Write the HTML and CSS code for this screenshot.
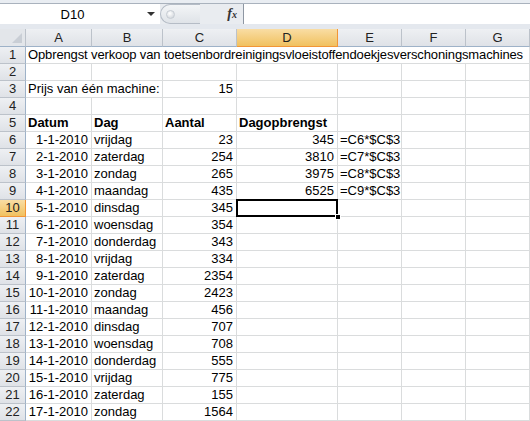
FILE: index.html
```html
<!DOCTYPE html>
<html>
<head>
<meta charset="utf-8">
<link rel="stylesheet" href="styles.css">
</head>
<body>
<div class="app">
  <div class="fbar">
    <div class="namebox">
      <span class="name">D10</span>
      <span class="arrow"></span>
    </div>
    <div class="fxzone">
      <div class="pill"><span class="knob"></span></div>
      <span class="fx">f<span class="x">x</span></span>
    </div>
    <div class="input"></div>
  </div>
  <div class="sheet">
    <div class="corner"><span class="tri"></span></div>
    <div class="ch">A</div><div class="ch">B</div><div class="ch">C</div><div class="ch sel">D</div><div class="ch">E</div><div class="ch">F</div><div class="ch">G</div>

    <div class="rh">1</div><div class="c span7 title">Opbrengst verkoop van toetsenbordreinigingsvloeistoffendoekjesverschoningsmachines</div>
    <div class="rh">2</div><div class="c"></div><div class="c"></div><div class="c"></div><div class="c"></div><div class="c"></div><div class="c"></div><div class="c"></div>
    <div class="rh">3</div><div class="c span2">Prijs van één machine:</div><div class="c r">15</div><div class="c"></div><div class="c"></div><div class="c"></div><div class="c"></div>
    <div class="rh">4</div><div class="c"></div><div class="c"></div><div class="c"></div><div class="c"></div><div class="c"></div><div class="c"></div><div class="c"></div>
    <div class="rh">5</div><div class="c b">Datum</div><div class="c b">Dag</div><div class="c b">Aantal</div><div class="c b">Dagopbrengst</div><div class="c"></div><div class="c"></div><div class="c"></div>
    <div class="rh">6</div><div class="c r">1-1-2010</div><div class="c">vrijdag</div><div class="c r">23</div><div class="c r">345</div><div class="c">=C6*$C$3</div><div class="c"></div><div class="c"></div>
    <div class="rh">7</div><div class="c r">2-1-2010</div><div class="c">zaterdag</div><div class="c r">254</div><div class="c r">3810</div><div class="c">=C7*$C$3</div><div class="c"></div><div class="c"></div>
    <div class="rh">8</div><div class="c r">3-1-2010</div><div class="c">zondag</div><div class="c r">265</div><div class="c r">3975</div><div class="c">=C8*$C$3</div><div class="c"></div><div class="c"></div>
    <div class="rh">9</div><div class="c r">4-1-2010</div><div class="c">maandag</div><div class="c r">435</div><div class="c r">6525</div><div class="c">=C9*$C$3</div><div class="c"></div><div class="c"></div>
    <div class="rh sel">10</div><div class="c r">5-1-2010</div><div class="c">dinsdag</div><div class="c r">345</div><div class="c active"><span class="handle"></span></div><div class="c"></div><div class="c"></div><div class="c"></div>
    <div class="rh">11</div><div class="c r">6-1-2010</div><div class="c">woensdag</div><div class="c r">354</div><div class="c"></div><div class="c"></div><div class="c"></div><div class="c"></div>
    <div class="rh">12</div><div class="c r">7-1-2010</div><div class="c">donderdag</div><div class="c r">343</div><div class="c"></div><div class="c"></div><div class="c"></div><div class="c"></div>
    <div class="rh">13</div><div class="c r">8-1-2010</div><div class="c">vrijdag</div><div class="c r">334</div><div class="c"></div><div class="c"></div><div class="c"></div><div class="c"></div>
    <div class="rh">14</div><div class="c r">9-1-2010</div><div class="c">zaterdag</div><div class="c r">2354</div><div class="c"></div><div class="c"></div><div class="c"></div><div class="c"></div>
    <div class="rh">15</div><div class="c r">10-1-2010</div><div class="c">zondag</div><div class="c r">2423</div><div class="c"></div><div class="c"></div><div class="c"></div><div class="c"></div>
    <div class="rh">16</div><div class="c r">11-1-2010</div><div class="c">maandag</div><div class="c r">456</div><div class="c"></div><div class="c"></div><div class="c"></div><div class="c"></div>
    <div class="rh">17</div><div class="c r">12-1-2010</div><div class="c">dinsdag</div><div class="c r">707</div><div class="c"></div><div class="c"></div><div class="c"></div><div class="c"></div>
    <div class="rh">18</div><div class="c r">13-1-2010</div><div class="c">woensdag</div><div class="c r">708</div><div class="c"></div><div class="c"></div><div class="c"></div><div class="c"></div>
    <div class="rh">19</div><div class="c r">14-1-2010</div><div class="c">donderdag</div><div class="c r">555</div><div class="c"></div><div class="c"></div><div class="c"></div><div class="c"></div>
    <div class="rh">20</div><div class="c r">15-1-2010</div><div class="c">vrijdag</div><div class="c r">775</div><div class="c"></div><div class="c"></div><div class="c"></div><div class="c"></div>
    <div class="rh">21</div><div class="c r">16-1-2010</div><div class="c">zaterdag</div><div class="c r">155</div><div class="c"></div><div class="c"></div><div class="c"></div><div class="c"></div>
    <div class="rh">22</div><div class="c r">17-1-2010</div><div class="c">zondag</div><div class="c r">1564</div><div class="c"></div><div class="c"></div><div class="c"></div><div class="c"></div>
  </div>
</div>
</body>
</html>
```

FILE: styles.css
```css
* { box-sizing: border-box; }
html, body { margin: 0; padding: 0; background: #fff; }
body { font-family: "Liberation Sans", Arial, sans-serif; font-size: 13px; color: #000; }
.app { width: 530px; height: 421px; overflow: hidden; }

.fbar {
  height: 29px;
  background: #e4e8ee;
  border-top: 3px solid #e9edf2;
  display: flex;
  align-items: flex-start;
  position: relative;
}
.fbar::before {
  content: "";
  position: absolute; left: 0; right: 0; top: 0; height: 1px;
  background: #a9b2bd;
}
.namebox {
  margin-top: 1px;
  width: 160px; height: 20px;
  background: #fff;
  display: flex; align-items: center;
}
.name { width: 145px; text-align: center; font-size: 13px; color: #000; }
.arrow {
  width: 0; height: 0;
  border-left: 4px solid transparent; border-right: 4px solid transparent;
  border-top: 4px solid #333;
  margin-left: 2px;
}
.fxzone {
  margin-top: 1px;
  width: 84px; height: 20px;
  display: flex; align-items: center; justify-content: space-between;
  background: #e9ecf0;
  border-right: 1px solid #8e97a3;
}
.pill {
  width: 40px; height: 20px;
  border: 1px solid #b5bcc6; border-right: none;
  border-radius: 10px 0 0 10px;
  background: linear-gradient(#f3f5f7, #dfe3e8);
  display: flex; align-items: center; padding-left: 5px;
}
.knob {
  width: 9px; height: 9px; border-radius: 50%;
  background: radial-gradient(circle at 40% 35%, #ffffff, #c9ced5);
  border: 1px solid #c6ccd3;
}
.fx {
  font-family: "Liberation Serif", "Times New Roman", serif;
  font-style: italic; font-weight: bold; font-size: 14px; color: #333;
  margin-right: 6px;
}
.fx .x { font-size: 10px; }
.input { flex: 1; margin-top: 1px; height: 20px; background: #fff; }

.sheet {
  display: grid;
  grid-template-columns: 26px 66px 71px 74px 101px 64px 64px 64px;
  grid-template-rows: 18px;
  grid-auto-rows: 17px;
}
.corner, .ch, .rh {
  background: linear-gradient(#eef0f3, #dfe2e7);
  border-right: 1px solid #bcc2ca;
  border-bottom: 1px solid #9eb2c8;
  color: #222;
  font-size: 13px;
  line-height: 17px;
  text-align: center;
}
.corner { position: relative; background: #e3e6ea; }
.tri {
  position: absolute; right: 3px; bottom: 3px;
  width: 0; height: 0;
  border-left: 10px solid transparent;
  border-bottom: 10px solid #c9ced5;
}
.rh { line-height: 16px; border-bottom-color: #bcc2ca; border-right-color: #9eb2c8; }
.ch.sel, .rh.sel {
  background: linear-gradient(#f9dda4, #f1c15f);
  border-color: #f29536;
}
.c {
  border-right: 1px solid #dadcdd;
  border-bottom: 1px solid #dadcdd;
  line-height: 16px;
  padding: 0 2px;
  white-space: nowrap;
}
.c.r { text-align: right; padding-right: 3px; }
.c.b { font-weight: bold; }
.span7 { grid-column: span 7; overflow: hidden; }
.title { letter-spacing: -0.13px; }
.span2 { grid-column: span 2; }
.active { position: relative; }
.active::after {
  content: "";
  position: absolute; left: -1px; top: -1px; right: -1px; bottom: -1px;
  border: 2px solid #000;
}
.handle {
  position: absolute; right: -4px; bottom: -4px;
  width: 6px; height: 6px;
  background: #000;
  border: 1px solid #fff;
  z-index: 2;
}
```
